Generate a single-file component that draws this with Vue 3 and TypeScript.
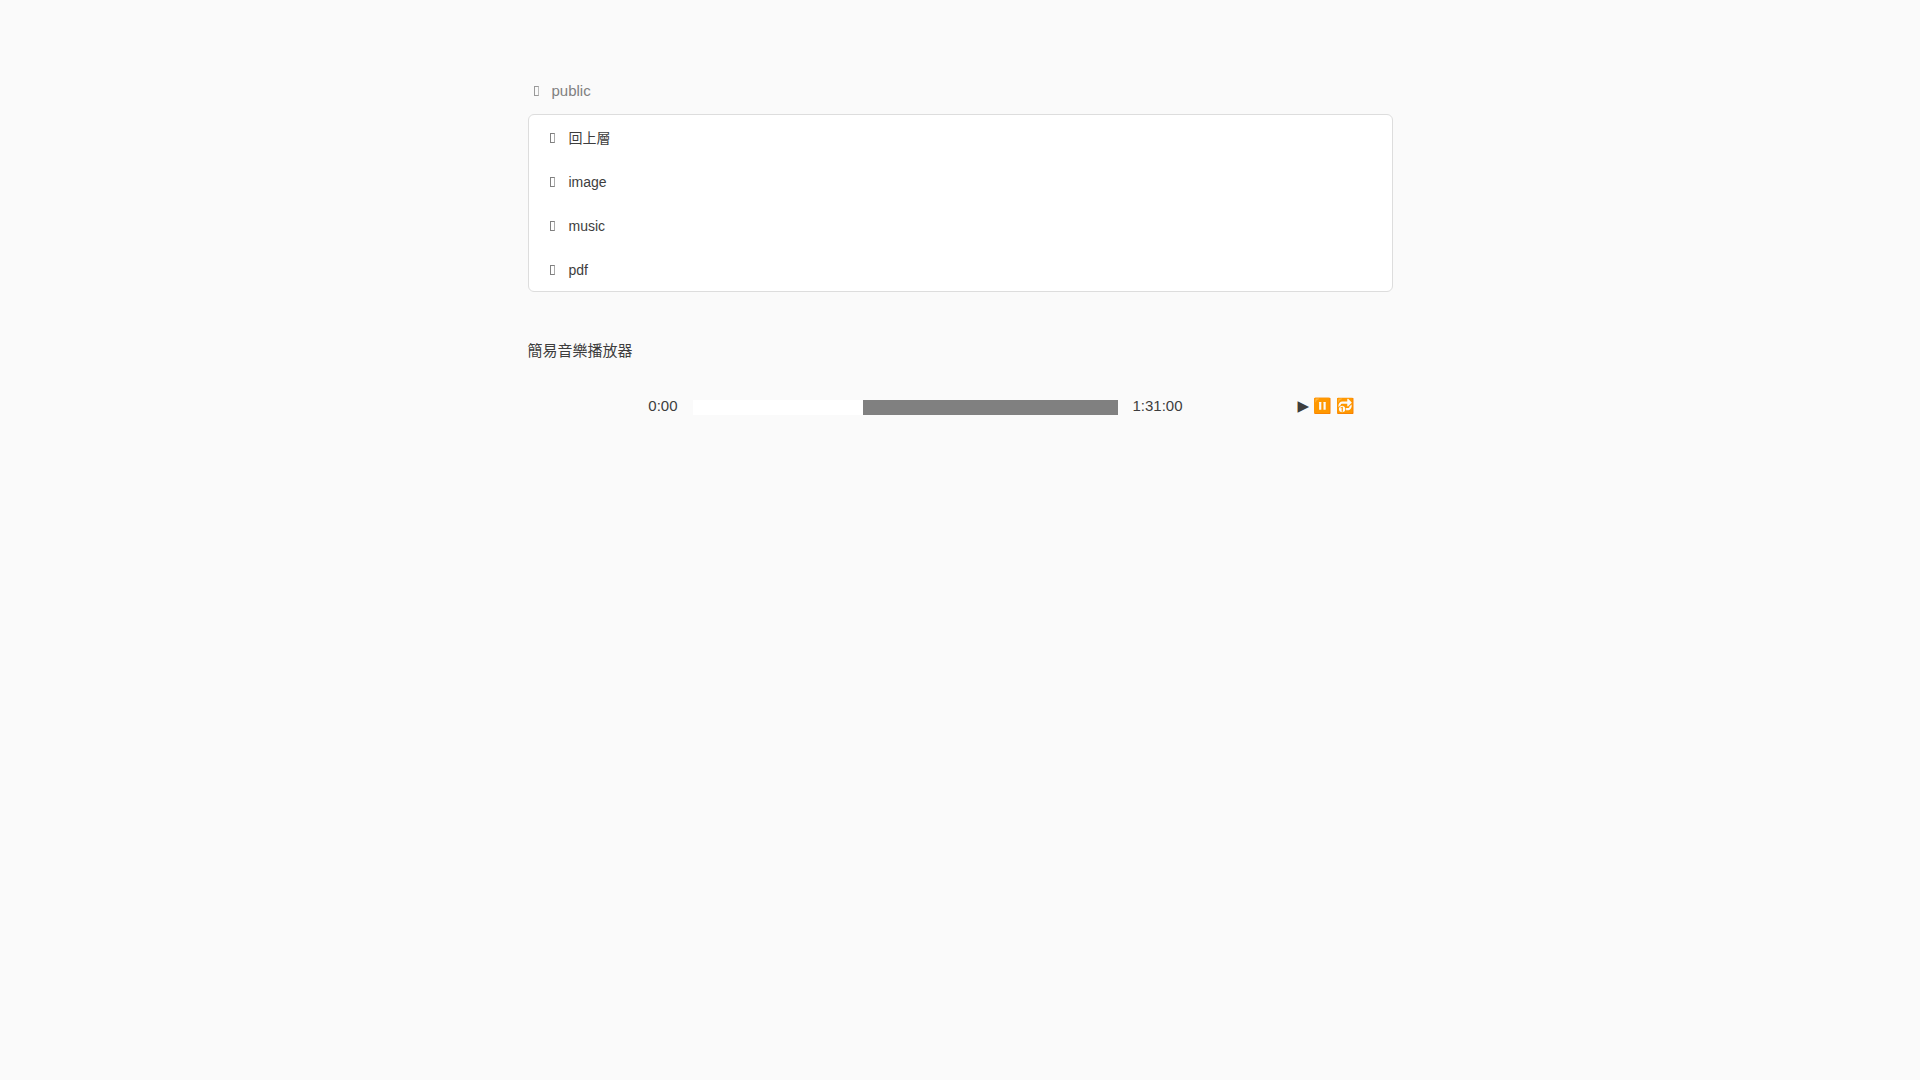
<script setup lang="ts">
import { ref } from 'vue'

const entries: string[] = ['回上層', 'image', 'music', 'pdf']
const played = ref(40)
</script>

<template>
  <main class="page">
    <header class="crumb">
      <span class="icon" aria-hidden="true"></span>
      <span>public</span>
    </header>
    <nav class="list">
      <a v-for="entry in entries" :key="entry" class="row" href="#">
        <span class="icon" aria-hidden="true"></span>
        <span>{{ entry }}</span>
      </a>
    </nav>
    <h1 class="title">簡易音樂播放器</h1>
    <section class="player">
      <span class="time start">0:00</span>
      <div class="track">
        <div class="played" :style="{ width: played + '%' }"></div>
      </div>
      <span class="time">1:31:00</span>
      <div class="controls">
        <button class="play" type="button" aria-label="播放">▶</button>
        <button type="button" aria-label="暫停">⏸️</button>
        <button type="button" aria-label="單曲循環">🔂</button>
      </div>
    </section>
  </main>
</template>

<style>
body {
  background: #fafafa;
}
</style>

<style scoped>
.page {
  width: calc(45% + 1px);
  margin: 0 auto;
  padding-top: 80px;
  font-family: "Liberation Sans", "Noto Sans CJK TC", sans-serif;
  font-size: 15px;
  line-height: 22px;
  color: #3d3d3d;
}

.crumb {
  display: flex;
  align-items: center;
  margin-bottom: 12px;
  color: #808080;
}

.icon {
  box-sizing: border-box;
  width: 5px;
  height: 10px;
  margin: 0 13px 0 6px;
  border: 1px solid #999;
  border-right-color: #bbb;
}

.list {
  border: 1px solid #ddd;
  border-radius: 6px;
  background: #fff;
}

.row {
  display: flex;
  align-items: center;
  gap: 1px;
  height: 42px;
  padding: 2px 15px 0;
  font-size: 14px;
  color: #3d3d3d;
  text-decoration: none;
}

.row .icon {
  border-color: #808080;
  border-right-color: #aaa;
}

.title {
  margin: 48px 0 33px;
  font-size: 15px;
  font-weight: 400;
}

.player {
  display: grid;
  grid-template-columns: 165fr 425fr 180fr 95fr;
  align-items: start;
}

.time {
  padding-left: 15px;
}

.start {
  padding: 0 15px 0 0;
  text-align: right;
}

.track {
  height: 15px;
  margin-top: 5px;
  background: #808080;
}

.played {
  height: 100%;
  background: #fff;
}

.controls {
  display: flex;
  gap: 4px;
}

.controls button {
  padding: 0;
  border: 0;
  background: none;
  font: inherit;
  color: inherit;
  cursor: pointer;
}

.controls .play {
  font-family: "DejaVu Sans", sans-serif;
}
</style>
